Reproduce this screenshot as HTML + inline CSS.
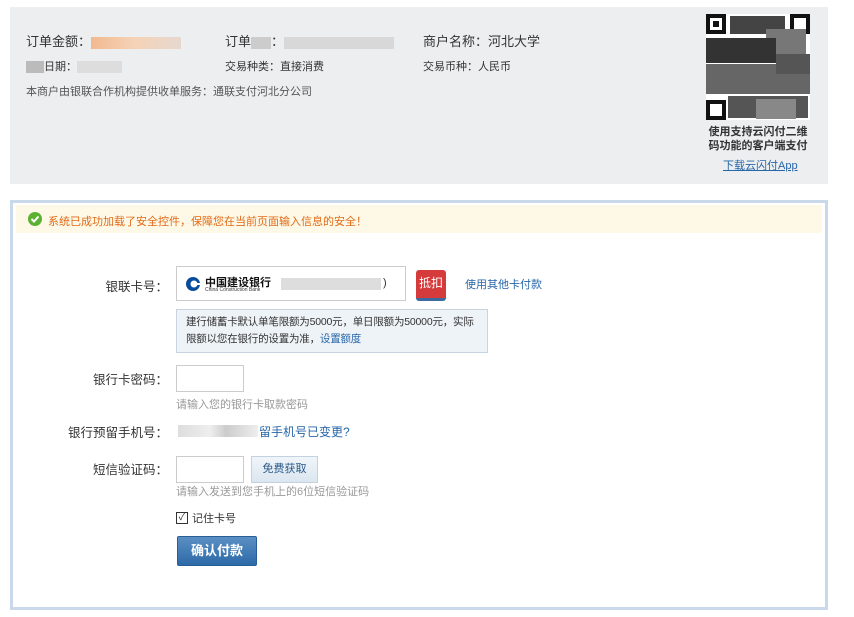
<!DOCTYPE html>
<html><head><meta charset="utf-8"><style>
body{margin:0;background:#fff;font-family:"Liberation Sans","Noto Sans CJK SC",sans-serif;font-size:12px;color:#333;width:854px;height:617px;overflow:hidden;position:relative}
.a{position:absolute;white-space:nowrap}
.top{position:absolute;left:10px;top:7px;width:818px;height:177px;background:#eceef0}
.blur{display:inline-block;height:12px;vertical-align:middle;background:#ccc}
.main{position:absolute;left:10px;top:200px;width:812px;height:404px;border:3px solid #c9d9e9}
.warn{position:absolute;left:3px;top:2px;width:806px;height:28px;background:#fdf9e6}
.lbl{position:absolute;text-align:right;width:130px;font-size:12.5px;color:#333}
.inp{position:absolute;border:1px solid #ccc;background:#fff}
a{color:#2766a8;text-decoration:none}
.hint{color:#999;font-size:11px}
</style></head><body>
<div class="top"></div>
<div class="a" style="left:26px;top:31px;font-size:13px">订单金额：<span class="blur" style="width:90px;background:linear-gradient(90deg,#f2b98f,#f5d3b8 50%,#e6d8cf)"></span></div>
<div class="a" style="left:225px;top:31px;font-size:13px">订单<span class="blur" style="width:20px"></span>：<span class="blur" style="width:110px;background:#d8d8d8"></span></div>
<div class="a" style="left:423px;top:31px;font-size:13px">商户名称：河北大学</div>
<div class="a" style="left:26px;top:58px;font-size:11px"><span class="blur" style="width:18px;background:#bbb"></span>日期：<span class="blur" style="width:45px;background:#ddd"></span></div>
<div class="a" style="left:225px;top:58px;font-size:11px">交易种类：直接消费</div>
<div class="a" style="left:423px;top:58px;font-size:11px">交易币种：人民币</div>
<div class="a" style="left:26px;top:83px;font-size:11px;color:#555">本商户由银联合作机构提供收单服务：通联支付河北分公司</div>
<svg class="a" style="left:706px;top:14px" width="104" height="106">
<rect width="104" height="106" fill="#fff"/>
<rect x="0" y="0" width="20" height="20" fill="#111"/><rect x="4" y="4" width="12" height="12" fill="#fff"/><rect x="7" y="7" width="6" height="6" fill="#111"/>
<rect x="84" y="0" width="20" height="20" fill="#111"/><rect x="88" y="4" width="12" height="12" fill="#fff"/>
<rect x="0" y="86" width="20" height="20" fill="#111"/><rect x="4" y="90" width="12" height="12" fill="#fff"/>
<rect x="24" y="2" width="55" height="18" fill="#444"/>
<rect x="60" y="15" width="40" height="25" fill="#777"/>
<rect x="0" y="24" width="70" height="25" fill="#333"/>
<rect x="0" y="50" width="104" height="30" fill="#666"/>
<rect x="70" y="40" width="34" height="20" fill="#555"/>
<rect x="22" y="82" width="80" height="22" fill="#555"/>
<rect x="50" y="85" width="40" height="20" fill="#888"/>
</svg>
<div class="a" style="left:706px;top:125px;font-size:11px;color:#333;line-height:14px;font-weight:bold;text-align:center;width:104px;white-space:normal">使用支持云闪付二维码功能的客户端支付</div>
<div class="a" style="left:723px;top:157px;font-size:11px"><a style="text-decoration:underline">下载云闪付App</a></div>

<div class="main">
<div class="warn"></div>
<svg class="a" style="left:15px;top:9px" width="14" height="14"><circle cx="7" cy="7" r="7" fill="#5cb132"/><path d="M3.5 7l2.5 2.5 4.5-5" stroke="#fff" stroke-width="2" fill="none"/></svg>
<div class="a" style="left:35px;top:10px;font-size:11px;color:#e26a18">系统已成功加载了安全控件，保障您在当前页面输入信息的安全！</div>

<div class="lbl" style="left:25px;top:73px">银联卡号：</div>
<div class="inp" style="left:163px;top:63px;width:228px;height:33px"></div>
<svg class="a" style="left:172px;top:73px" width="16" height="16"><circle cx="8" cy="8" r="7" fill="#0a4c9c"/><circle cx="9" cy="8" r="3.5" fill="#fff"/><rect x="8" y="7" width="8" height="2" fill="#fff"/></svg>
<div class="a" style="left:192px;top:71px;font-size:11px;font-weight:bold;color:#111">中国建设银行</div>
<div class="a" style="left:192px;top:84px;font-size:5px;color:#333">China Construction Bank</div>
<span class="a blur" style="left:268px;top:75px;width:100px;background:#ddd"></span>
<div class="a" style="left:370px;top:74px;font-size:11px">)</div>
<div class="a" style="left:403px;top:67px;width:30px;height:28px;background:#d63b3b;border-radius:3px;color:#fff;font-size:12px;line-height:26px;text-align:center;border-bottom:3px solid #3a6aa0">抵扣</div>
<div class="a" style="left:452px;top:73px;font-size:11px"><a>使用其他卡付款</a></div>
<div class="a" style="left:163px;top:106px;background:#eef3f8;border:1px solid #c8d4e0;font-size:10.5px;letter-spacing:-0.2px;line-height:17px;padding:4px 12px 0 9px;white-space:normal;box-sizing:border-box;width:312px;height:44px">建行储蓄卡默认单笔限额为5000元，单日限额为50000元，实际限额以您在银行的设置为准，<a>设置额度</a></div>

<div class="lbl" style="left:25px;top:166px">银行卡密码：</div>
<div class="inp" style="left:163px;top:162px;width:66px;height:25px"></div>
<div class="a hint" style="left:163px;top:193px">请输入您的银行卡取款密码</div>
<div class="lbl" style="left:25px;top:219px">银行预留手机号：</div>
<span class="a blur" style="left:165px;top:222px;width:80px;background:linear-gradient(90deg,#ddd,#eee 40%,#ccc 60%,#eee)"></span>
<div class="a" style="left:246px;top:220px;font-size:12px"><a>留手机号已变更?</a></div>
<div class="lbl" style="left:25px;top:256px">短信验证码：</div>
<div class="inp" style="left:163px;top:253px;width:66px;height:25px"></div>
<div class="a" style="left:238px;top:253px;width:65px;height:25px;background:linear-gradient(#f0f5fa,#dbe6f0);border:1px solid #c4d2df;text-align:center;line-height:25px;font-size:11px;color:#2a5a8a">免费获取</div>
<div class="a hint" style="left:163px;top:280px">请输入发送到您手机上的6位短信验证码</div>
<div class="a" style="left:163px;top:309px;width:10px;height:10px;border:1px solid #333;background:#fff;font-size:10px;line-height:10px;text-align:center">✓</div>
<div class="a" style="left:179px;top:307px;font-size:11px">记住卡号</div>
<div class="a" style="left:164px;top:333px;width:78px;height:28px;background:linear-gradient(#5a8fc4,#2d6aa8);border:1px solid #285e96;border-radius:2px;color:#fff;font-weight:bold;font-size:13px;line-height:28px;text-align:center">确认付款</div>
</div>
</body></html>
